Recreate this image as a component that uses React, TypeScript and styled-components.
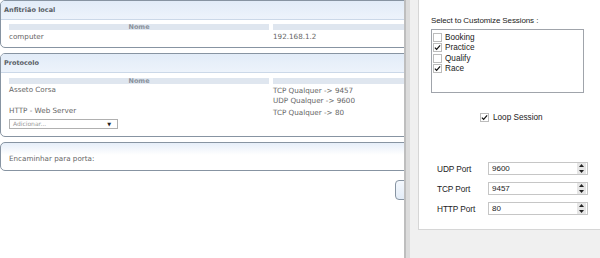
import React from 'react'
import styled, {createGlobalStyle} from 'styled-components'

const GlobalStyle = createGlobalStyle`
  html, body {
    margin: 0;
    padding: 0;
    background: #f0f0f0;
  }
  body {
    width: 600px;
    height: 258px;
    overflow: hidden;
  }
`

const Page = styled.div`
  display: flex;
  width: 600px;
  height: 258px;
  overflow: hidden;
`

// ---------- left: the embedded web page ----------

const WebPane = styled.div`
  width: 404px;
  flex: none;
  height: 100%;
  overflow: hidden;
  background: #fff;
`

const WebInner = styled.div`
  width: 440px;
  display: flex;
  flex-direction: column;
  gap: 5px;
  font-family: 'DejaVu Sans', Verdana, sans-serif;
  color: #666;
`

const Section = styled.div`
  border: 1px solid #8794a2;
  border-radius: 5px;
  background: #fff;
  overflow: hidden;
`

const SectionHeader = styled.div`
  height: 18px;
  line-height: 18px;
  padding-left: 3px;
  background: linear-gradient(#e2ecf8, #edf3fb);
  border-bottom: 1px solid #cbd8e8;
  font-size: 6.5px;
  font-weight: bold;
  color: #5a5f66;
`

const SectionBody = styled.div<{$top?: number; $bottom?: number}>`
  padding: ${(p) => p.$top ?? 4}px 0 ${(p) => p.$bottom ?? 5}px 8px;
`

const Table = styled.div`
  display: grid;
  grid-template-columns: 260px 1fr;
  column-gap: 4px;
  font-size: 7.2px;
  line-height: 10px;
`

const HeadCell = styled.div`
  height: 6px;
  line-height: 6px;
  background: #dfe6ef;
  font-size: 6.5px;
  font-weight: bold;
  color: #8a929c;
  text-align: center;
  margin-bottom: 1px;
`

const Cell = styled.div<{$pad?: number}>`
  display: flex;
  flex-direction: column;
  padding-top: ${(p) => p.$pad ?? 0}px;
  white-space: nowrap;
`

const SelectBox = styled.div`
  margin-top: 3px;
  width: 98px;
  height: 8px;
  border: 1px solid #b0b0b0;
  display: flex;
  align-items: center;
  justify-content: space-between;
  padding: 0 6px 0 3px;
  box-sizing: content-box;
  font-size: 6px;
  color: #999;
`

const SelectArrow = styled.span`
  font-size: 5px;
  color: #222;
`

const FadeSection = styled(Section)`
  background: linear-gradient(#e6eef9, #fff 12px);
`

const PortText = styled.div`
  padding: 11px 0 6px 8px;
  font-size: 7.2px;
  line-height: 10px;
`

const ButtonRow = styled.div`
  padding: 4px 0 0 395px;
`

const PageButton = styled.div`
  width: 40px;
  height: 18px;
  border: 1px solid #8794a2;
  border-radius: 4px;
  background: linear-gradient(#f4f8fd, #e3ecf7);
`

// ---------- divider between the two panes ----------

const Divider = styled.div`
  width: 14px;
  flex: none;
  height: 100%;
  background: #f0f0f0;
  border-left: 2px solid #bebebe;
  box-shadow: inset 4px 0 0 #dcdcdc;
  box-sizing: border-box;
`

// ---------- right: the windows form ----------

const FormPane = styled.div`
  flex: 1;
  background: #f0f0f0;
  font-family: 'Liberation Sans', Arial, sans-serif;
  font-size: 8px;
  color: #000;
`

const FormPanel = styled.div`
  height: 230px;
  box-sizing: border-box;
  background: #fff;
  border-left: 1px solid #d6d6d6;
  border-bottom: 1px solid #d6d6d6;
  padding: 16px 0 0 12px;
  display: flex;
  flex-direction: column;
`

const FormLabel = styled.div`
  line-height: 10px;
  height: 10px;
  letter-spacing: -0.1px;
  color: #222;
`

const ListBox = styled.div`
  margin-top: 3px;
  width: 153px;
  height: 64px;
  box-sizing: border-box;
  border: 1px solid #a0a4ab;
  padding: 2px 0 0 1px;
  display: flex;
  flex-direction: column;
`

const ListItem = styled.div`
  display: flex;
  align-items: center;
  gap: 3px;
  height: 10.5px;
  font-size: 8.2px;
  color: #222;
`

const Box = styled.span<{$checked?: boolean}>`
  width: 9px;
  height: 9px;
  box-sizing: border-box;
  border: 1px solid #bcbcbc;
  background: #fff;
  display: inline-flex;
  align-items: center;
  justify-content: center;
  flex: none;
`

const LoopRow = styled.div`
  margin-top: 19px;
  padding-left: 49px;
  display: flex;
  align-items: center;
  gap: 4px;
  height: 10px;
  font-size: 8.2px;
  color: #222;
`

const Ports = styled.div`
  margin-top: 40px;
  display: flex;
  flex-direction: column;
  gap: 7px;
  padding-left: 6px;
`

const PortRow = styled.div`
  display: flex;
  align-items: center;
  height: 13px;
`

const PortLabel = styled.span`
  width: 51px;
  font-size: 8.3px;
  letter-spacing: -0.1px;
  color: #222;
`

const SpinInput = styled.div`
  width: 100px;
  height: 13px;
  box-sizing: border-box;
  border: 1px solid #c6c6c6;
  display: flex;
  align-items: center;
  justify-content: space-between;
  padding-left: 3px;
  font-size: 8px;
  color: #222;
`

const Spinner = styled.div`
  width: 9px;
  height: 11px;
  background: #e6e6e6;
  display: flex;
  flex-direction: column;
  align-items: center;
  justify-content: space-around;
  margin-right: 1px;
`

const Check = () => (
  <svg width="8" height="7" viewBox="0 0 8 7">
    <path d="M1 3.6 L3 5.6 L7 1" fill="none" stroke="#111" strokeWidth="1.4" />
  </svg>
)

const Arrow = ({up}: {up?: boolean}) => (
  <svg width="5" height="3" viewBox="0 0 5 3">
    <path d={up ? 'M0 3 L2.5 0 L5 3 Z' : 'M0 0 L2.5 3 L5 0 Z'} fill="#222" />
  </svg>
)

const sessions = [
  {name: 'Booking', checked: false},
  {name: 'Practice', checked: true},
  {name: 'Qualify', checked: false},
  {name: 'Race', checked: true},
]

const ports = [
  {label: 'UDP Port', value: '9600'},
  {label: 'TCP Port', value: '9457'},
  {label: 'HTTP Port', value: '80'},
]

export default function App() {
  return (
    <Page>
      <GlobalStyle />
      <WebPane>
        <WebInner>
          <Section>
            <SectionHeader>Anfitrião local</SectionHeader>
            <SectionBody>
              <Table>
                <HeadCell>Nome</HeadCell>
                <HeadCell />
                <Cell $pad={1}>computer</Cell>
                <Cell $pad={1}>192.168.1.2</Cell>
              </Table>
            </SectionBody>
          </Section>
          <Section>
            <SectionHeader>Protocolo</SectionHeader>
            <SectionBody $top={5} $bottom={7}>
              <Table>
                <HeadCell>Nome</HeadCell>
                <HeadCell />
                <Cell>Asseto Corsa</Cell>
                <Cell $pad={1}>
                  <span>TCP Qualquer -&gt; 9457</span>
                  <span>UDP Qualquer -&gt; 9600</span>
                </Cell>
                <Cell $pad={0}>
                  <span>HTTP - Web Server</span>
                  <SelectBox>
                    <span>Adicionar...</span>
                    <SelectArrow>▼</SelectArrow>
                  </SelectBox>
                </Cell>
                <Cell $pad={2}>TCP Qualquer -&gt; 80</Cell>
              </Table>
            </SectionBody>
          </Section>
          <FadeSection>
            <PortText>Encaminhar para porta:</PortText>
          </FadeSection>
          <ButtonRow>
            <PageButton />
          </ButtonRow>
        </WebInner>
      </WebPane>
      <Divider />
      <FormPane>
        <FormPanel>
          <FormLabel>Select to Customize Sessions :</FormLabel>
          <ListBox>
            {sessions.map((s) => (
              <ListItem key={s.name}>
                <Box $checked={s.checked}>{s.checked && <Check />}</Box>
                {s.name}
              </ListItem>
            ))}
          </ListBox>
          <LoopRow>
            <Box $checked>
              <Check />
            </Box>
            Loop Session
          </LoopRow>
          <Ports>
            {ports.map((p) => (
              <PortRow key={p.label}>
                <PortLabel>{p.label}</PortLabel>
                <SpinInput>
                  {p.value}
                  <Spinner>
                    <Arrow up />
                    <Arrow />
                  </Spinner>
                </SpinInput>
              </PortRow>
            ))}
          </Ports>
        </FormPanel>
      </FormPane>
    </Page>
  )
}
